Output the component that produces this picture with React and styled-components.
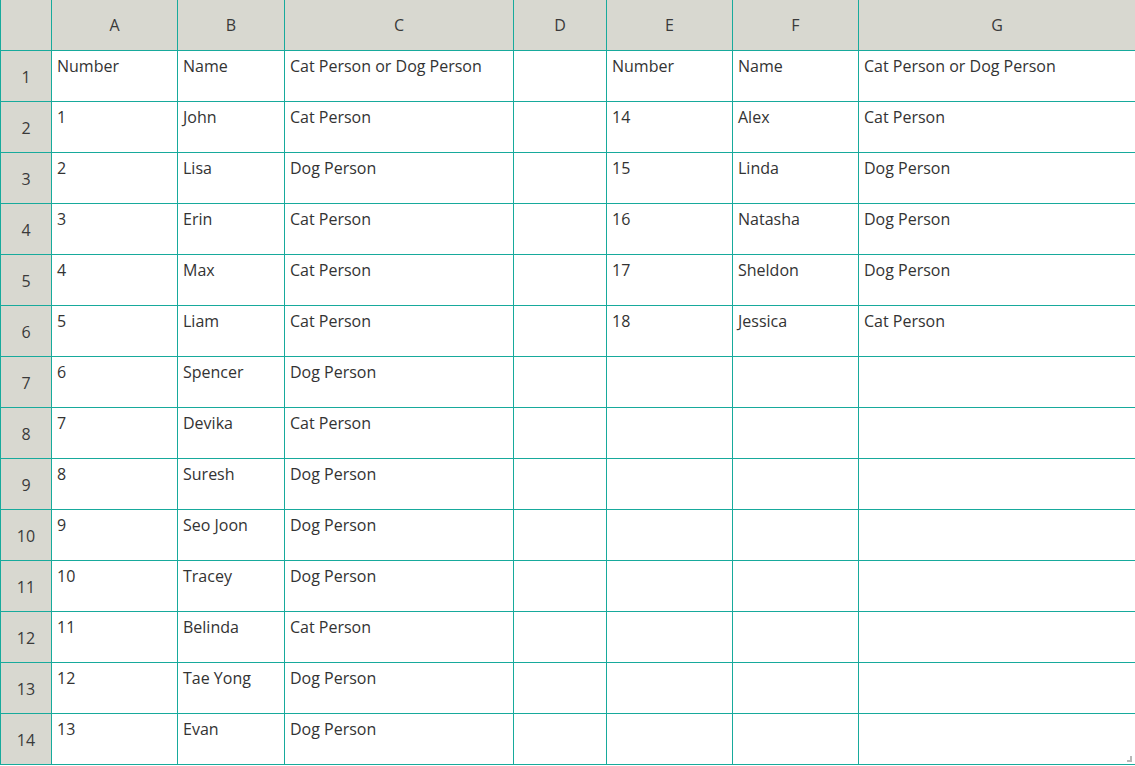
import React from "react";
import styled, { createGlobalStyle } from "styled-components";

const Global = createGlobalStyle`
  html, body { margin: 0; padding: 0; background: #fff; }
  body { font-family: "Open Sans", "Noto Sans", sans-serif; overflow: hidden; }
`;

const Sheet = styled.div`
  display: grid;
  grid-template-columns: 50px 125px 106px 228px 92px 125px 125px 276px;
  grid-auto-rows: 50px;
  gap: 1px;
  padding: 0 0 1px 1px;
  background: #17aa9c;
  width: 1135px;
  box-sizing: border-box;
  overflow: hidden;
`;

const Head = styled.div`
  background: #d8d8d0;
  color: #3a3a3a;
  font-size: 16px;
  display: flex;
  align-items: center;
  justify-content: center;
  padding-top: ${(p) => (p.$row ? "1px" : "0")};
  box-sizing: border-box;
`;

const Cell = styled.div`
  position: relative;
  background: #fff;
  color: #333;
  font-size: 16px;
  line-height: 22px;
  padding: 4px 5px 0 5px;
  box-sizing: border-box;
  white-space: nowrap;
  overflow: hidden;
`;

const Grip = styled.span`
  position: absolute;
  right: 3px;
  bottom: 2px;
  width: 3px;
  height: 4px;
  border-right: 2px solid #b8b8b8;
  border-bottom: 2px solid #b8b8b8;
`;

const cols = ["A", "B", "C", "D", "E", "F", "G"];

const left = [
  ["Number", "Name", "Cat Person or Dog Person"],
  ["1", "John", "Cat Person"],
  ["2", "Lisa", "Dog Person"],
  ["3", "Erin", "Cat Person"],
  ["4", "Max", "Cat Person"],
  ["5", "Liam", "Cat Person"],
  ["6", "Spencer", "Dog Person"],
  ["7", "Devika", "Cat Person"],
  ["8", "Suresh", "Dog Person"],
  ["9", "Seo Joon", "Dog Person"],
  ["10", "Tracey", "Dog Person"],
  ["11", "Belinda", "Cat Person"],
  ["12", "Tae Yong", "Dog Person"],
  ["13", "Evan", "Dog Person"],
];

const right = [
  ["Number", "Name", "Cat Person or Dog Person"],
  ["14", "Alex", "Cat Person"],
  ["15", "Linda", "Dog Person"],
  ["16", "Natasha", "Dog Person"],
  ["17", "Sheldon", "Dog Person"],
  ["18", "Jessica", "Cat Person"],
];

export default function App() {
  return (
    <>
      <Global />
      <Sheet>
        <Head />
        {cols.map((c) => (
          <Head key={c}>{c}</Head>
        ))}
        {left.map((r, i) => {
          const rr = right[i] || ["", "", ""];
          const last = i === left.length - 1;
          return (
            <React.Fragment key={i}>
              <Head $row>{i + 1}</Head>
              <Cell>{r[0]}</Cell>
              <Cell>{r[1]}</Cell>
              <Cell>{r[2]}</Cell>
              <Cell />
              <Cell>{rr[0]}</Cell>
              <Cell>{rr[1]}</Cell>
              <Cell>
                {rr[2]}
                {last && <Grip />}
              </Cell>
            </React.Fragment>
          );
        })}
      </Sheet>
    </>
  );
}
